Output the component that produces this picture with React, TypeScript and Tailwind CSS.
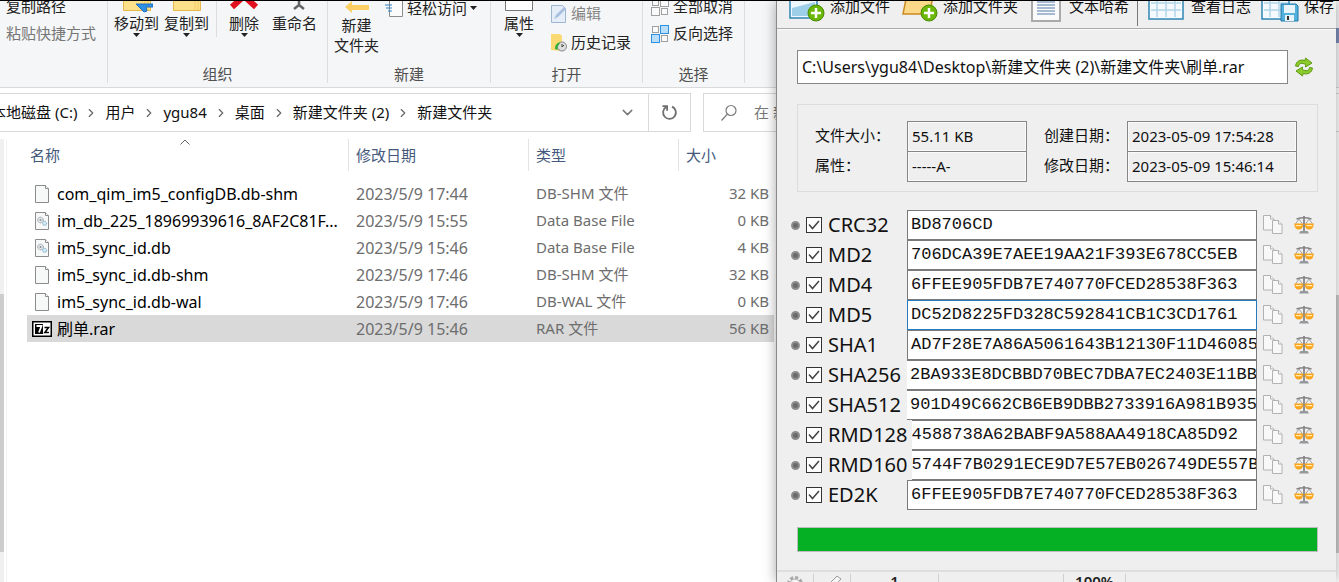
import { ChevronRight, ChevronDown } from 'lucide-react'

const ui = "font-['Noto_Sans','Noto_Sans_CJK_SC',sans-serif]"

interface FileProps {
    name: string,
    date: string,
    type: string,
    size: string,
    icon: 'blank' | 'db' | 'rar'
}

const files: FileProps[] = [
    { name: 'com_qim_im5_configDB.db-shm', date: '2023/5/9 17:44', type: 'DB-SHM 文件', size: '32 KB', icon: 'blank' },
    { name: 'im_db_225_18969939616_8AF2C81F...', date: '2023/5/9 15:55', type: 'Data Base File', size: '0 KB', icon: 'db' },
    { name: 'im5_sync_id.db', date: '2023/5/9 15:46', type: 'Data Base File', size: '4 KB', icon: 'db' },
    { name: 'im5_sync_id.db-shm', date: '2023/5/9 17:46', type: 'DB-SHM 文件', size: '32 KB', icon: 'blank' },
    { name: 'im5_sync_id.db-wal', date: '2023/5/9 17:46', type: 'DB-WAL 文件', size: '0 KB', icon: 'blank' },
    { name: '刷单.rar', date: '2023/5/9 15:46', type: 'RAR 文件', size: '56 KB', icon: 'rar' },
]

interface HashProps {
    name: string,
    value: string,
    field: string
}

const plain = 'border-[#7a7a7a] pl-[3px]'
const focused = 'border-[#2a7ab9] pl-[3px]'
const open = 'border-[#7a7a7a] border-l-0 pl-[3px]'
const tight = 'ml-1 border-[#7a7a7a] border-l-0 pl-0'

const hashes: HashProps[] = [
    { name: 'CRC32', value: 'BD8706CD', field: plain },
    { name: 'MD2', value: '706DCA39E7AEE19AA21F393E678CC5EB', field: plain },
    { name: 'MD4', value: '6FFEE905FDB7E740770FCED28538F363', field: plain },
    { name: 'MD5', value: 'DC52D8225FD328C592841CB1C3CD1761', field: focused },
    { name: 'SHA1', value: 'AD7F28E7A86A5061643B12130F11D46085', field: plain },
    { name: 'SHA256', value: '2BA933E8DCBBD70BEC7DBA7EC2403E11BB', field: open },
    { name: 'SHA512', value: '901D49C662CB6EB9DBB2733916A981B935', field: open },
    { name: 'RMD128', value: '4588738A62BABF9A588AA4918CA85D92', field: tight },
    { name: 'RMD160', value: '5744F7B0291ECE9D7E57EB026749DE557B', field: tight },
    { name: 'ED2K', value: '6FFEE905FDB7E740770FCED28538F363', field: plain },
]

function FileIcon({ icon }: { icon: FileProps['icon'] }) {
    if (icon === 'rar') {
        return (
            <svg width="20" height="16" viewBox="0 0 20 16" className="shrink-0">
                <rect x="0.75" y="0.75" width="18.5" height="14.5" fill="#fff" stroke="#000" strokeWidth="1.5" />
                <rect x="3" y="3" width="8" height="10" fill="#000" />
                <path d="M4.5 5h5L7 11.5" fill="none" stroke="#fff" strokeWidth="1.8" />
                <path d="M12.5 6.5h4l-3.6 5h4" fill="none" stroke="#000" strokeWidth="1.6" />
            </svg>
        )
    }
    return (
        <svg width="16" height="20" viewBox="0 0 16 20" className="ml-[2px] shrink-0">
            <path d="M1.5 1.5h10l3 3v14h-13z" fill="#f7f8f8" stroke="#8c8c8c" />
            <path d="M11.5 1.5v3h3" fill="#fff" stroke="#8c8c8c" />
            {icon === 'db' && (
                <>
                    <circle cx="6.5" cy="9" r="2.8" fill="#e4e9ec" stroke="#8a9298" strokeDasharray="1.2 0.6" />
                    <circle cx="6.5" cy="9" r="1" fill="#8a9298" />
                    <circle cx="10.6" cy="12.4" r="2" fill="#d6ecf8" stroke="#6fa5c4" strokeDasharray="1.2 0.6" />
                </>
            )}
        </svg>
    )
}

function Caret() {
    return <svg width="7" height="4" viewBox="0 0 7 4"><path d="M0 0h7L3.5 4z" fill="#222" /></svg>
}

function FolderIcon({ arrow }: { arrow?: boolean }) {
    return (
        <svg width="32" height="32" viewBox="0 0 32 32">
            <path d="M2.5 3.5h27v26h-27z" fill="#ffe08a" stroke="#e5b94a" />
            <path d="M24 4v25M27 4v25" stroke="#f2cc66" />
            {arrow && <path d="M15 23h17v3h-7l1 4-3 1-8-8z" fill="#2f8fe4" stroke="#1c6fc0" />}
        </svg>
    )
}

function BigButton({ icon, text, caret }: { icon: React.ReactNode, text: string[], caret?: boolean }) {
    return (
        <button className="flex flex-col items-center">
            {icon}
            {text.map((line) => <span key={line} className="h-5 leading-5">{line}</span>)}
            {caret && <Caret />}
        </button>
    )
}

function Group({ label, width, children }: { label: string, width: string, children: React.ReactNode }) {
    return (
        <section className={`flex shrink-0 flex-col justify-end border-r border-[#dcdddf] ${width}`}>
            <div className="flex h-[60px] flex-col justify-end">{children}</div>
            <div className="h-[22px] pt-[5px] text-center leading-4 text-[#505050]">{label}</div>
        </section>
    )
}

function SelectIcon({ mixed }: { mixed?: boolean }) {
    const on = { fill: '#b8defc', stroke: '#2f8fe0' }
    const off = { fill: '#fafafa', stroke: '#a0a0a0' }
    return (
        <svg width="18" height="18" viewBox="0 0 18 18">
            <rect x="1.5" y="1.5" width="6" height="6" {...off} />
            <rect x="9.5" y="0.5" width="8" height="8" {...(mixed ? on : off)} />
            <rect x="0.5" y="9.5" width="8" height="8" {...(mixed ? on : off)} />
            <rect x="10.5" y="10.5" width="6" height="6" {...off} />
        </svg>
    )
}

function Ribbon() {
    return (
        <div className="flex h-[87px] shrink-0 items-end overflow-hidden border-b border-[#d9dadb] bg-[#f5f6f7] pb-1 text-[15px] text-[#222]">
            <Group label="" width="w-[108px]">
                <div className="flex flex-col items-start pb-3.5 pl-1.5 whitespace-nowrap">
                    <button className="h-[27px]">复制路径</button>
                    <button className="h-[27px] text-[#767676]">粘贴快捷方式</button>
                </div>
            </Group>
            <Group label="组织" width="w-[220px]">
                <div className="flex items-end pb-6 pl-1.5">
                    <div className="flex gap-[5px] border-r border-[#dcdddf] pr-[7px]">
                        <BigButton icon={<FolderIcon arrow />} text={['移动到']} caret />
                        <BigButton icon={<FolderIcon />} text={['复制到']} caret />
                    </div>
                    <div className="flex gap-3 pl-[11px]">
                        <BigButton
                            icon={<svg width="32" height="32" viewBox="0 0 32 32"><path d="M4 4l24 22M28 4L4 26" stroke="#e0101e" strokeWidth="6" /></svg>}
                            text={['删除']}
                            caret
                        />
                        <BigButton
                            icon={<svg width="32" height="32" viewBox="0 0 32 32"><path d="M20 10v15M20 24l-5 4M20 24l5 4" stroke="#666" strokeWidth="2.5" fill="none" /></svg>}
                            text={['重命名']}
                        />
                    </div>
                </div>
            </Group>
            <Group label="新建" width="w-[163px]">
                <div className="flex items-end gap-[5px] pb-1.5 pl-1.5">
                    <BigButton
                        icon={<svg width="32" height="32" viewBox="0 0 32 32"><path d="M4 24l7-6v4h17v5H11v3z" fill="#fbcf63" /></svg>}
                        text={['新建', '文件夹']}
                    />
                    <button className="mb-9 flex items-center gap-[3px]">
                        <svg width="20" height="20" viewBox="0 0 20 20">
                            <path d="M5.5 1.5h13v17h-13z" fill="#fbfbfb" stroke="#8c8c8c" />
                            <path d="M1 7h7M2 10h6M4 13h4" stroke="#2f80c4" />
                        </svg>
                        轻松访问
                        <Caret />
                    </button>
                </div>
            </Group>
            <Group label="打开" width="w-[152px]">
                <div className="flex items-end gap-4 pl-3">
                    <div className="mb-6">
                        <BigButton
                            icon={<svg width="32" height="32" viewBox="0 0 32 32"><path d="M2.5 4.5h27v25h-27z" fill="#fff" stroke="#777" /></svg>}
                            text={['属性']}
                            caret
                        />
                    </div>
                    <div className="flex flex-col pb-1">
                        <button className="flex h-[29px] items-center gap-1 text-[#858585]">
                            <svg width="16" height="18" viewBox="0 0 16 18">
                                <path d="M0.5 0.5h11l3 3v14h-14z" fill="#e4edf8" stroke="#9fb6d3" />
                                <path d="M3 14l2-4 8-8 2 2-8 8z" fill="#a9c0de" />
                            </svg>
                            编辑
                        </button>
                        <button className="flex h-[29px] items-center gap-1">
                            <svg width="16" height="18" viewBox="0 0 16 18">
                                <path d="M0 0h9l2 2v15l-11-1z" fill="#fbd973" />
                                <circle cx="11" cy="12.5" r="4.5" fill="#ddd" stroke="#888" />
                                <path d="M11 10v3l2-2" stroke="#444" fill="none" />
                                <path d="M4 15c0-4 2-6 5-7l-1 3c-2 1-2 3-1 5z" fill="#2fae3c" />
                            </svg>
                            历史记录
                        </button>
                    </div>
                </div>
            </Group>
            <Group label="选择" width="w-[102px]">
                <div className="flex flex-col pb-3.5 pl-2 whitespace-nowrap">
                    <button className="flex h-[27px] items-center gap-1"><SelectIcon />全部取消</button>
                    <button className="flex h-[27px] items-center gap-1"><SelectIcon mixed />反向选择</button>
                </div>
            </Group>
        </div>
    )
}

function AddressBar() {
    const path = ['本地磁盘 (C:)', '用户', 'ygu84', '桌面', '新建文件夹 (2)', '新建文件夹']
    return (
        <div className="flex h-[50px] shrink-0 gap-3 overflow-hidden pt-[5px] pb-[6px] text-[15px]">
            <nav className="flex min-w-0 flex-1 border border-l-0 border-[#d9d9d9]">
                <div className="-ml-[9px] flex flex-1 items-center whitespace-nowrap">
                    {path.map((item, i) => (
                        <div key={item} className="flex items-center">
                            {i > 0 && <ChevronRight size={14} className="mx-[7px] text-[#666]" />}
                            <a href="#" className="text-[#111]">{item}</a>
                        </div>
                    ))}
                </div>
                <button aria-label="展开" className="px-3"><ChevronDown size={17} className="text-[#777]" /></button>
                <button aria-label="刷新" className="border-l border-[#d9d9d9] px-3">
                    <svg width="17" height="17" viewBox="0 0 17 17" fill="none" stroke="#6f6f6f" strokeWidth="1.800">
                        <path d="M11 2.600a6.400 6.400 0 1 1-5.600.3" />
                        <path d="M1.500 2.200h4.600v4.600" />
                    </svg>
                </button>
            </nav>
            <label className="flex w-[73px] shrink-0 items-center gap-4 overflow-hidden border border-r-0 border-[#d9d9d9] pl-4 text-[#777]">
                <svg width="18" height="18" viewBox="0 0 18 18" className="shrink-0" fill="none" stroke="#7c7c7c" strokeWidth="1.200">
                    <circle cx="11" cy="6.500" r="5" />
                    <path d="M7.500 10L1.500 16.500" />
                </svg>
                <input placeholder="在 新建文件夹 中搜索" className="w-44 shrink-0 placeholder:text-[#777]" />
            </label>
        </div>
    )
}

function FileTable() {
    const head = 'flex h-8 items-center border-r border-[#e3e3e3] pl-[7px] text-[#44597c]'
    return (
        <div className="flex flex-1 pt-px">
            <div className="w-1 shrink-0 bg-[#f0f0f0] pt-[155px]">
                <div className="h-[258px] bg-[#cdcdcd]" />
            </div>
            <div className="ml-0.5 flex-1 border-l border-[#f3f3f3] pr-0.5 pl-5">
                <table className="w-full table-fixed text-left text-[15px]">
                    <colgroup>
                        <col />
                        <col className="w-[180px]" />
                        <col className="w-[150px]" />
                        <col className="w-[95px]" />
                    </colgroup>
                    <thead>
                        <tr>
                            <th className="p-0 pb-[9px] font-normal">
                                <div className={`${head} relative !pl-[3px]`}>
                                    名称
                                    <svg width="10" height="6" viewBox="0 0 10 6" className="absolute top-0 left-1/2 -ml-2"><path d="M0.5 5.5L5 1l4.500 4.500" fill="none" stroke="#666" /></svg>
                                </div>
                            </th>
                            <th className="p-0 pb-[9px] font-normal"><div className={head}>修改日期</div></th>
                            <th className="p-0 pb-[9px] font-normal"><div className={head}>类型</div></th>
                            <th className="p-0 pb-[9px] font-normal"><div className={`${head} border-r-0`}>大小</div></th>
                        </tr>
                    </thead>
                    <tbody className="whitespace-nowrap text-[#6d6d6d]">
                        {files.map((file) => (
                            <tr key={file.name} className={file.icon === 'rar' ? 'h-[27px] bg-[#d9d9d9]' : 'h-[27px]'}>
                                <td className="p-0 pl-[5px] text-base">
                                    <div className="flex items-center text-black">
                                        <div className="w-[25px] shrink-0"><FileIcon icon={file.icon} /></div>
                                        {file.name}
                                    </div>
                                </td>
                                <td className="p-0 pl-[7px] text-base">{file.date}</td>
                                <td className="p-0 pl-[7px]">{file.type}</td>
                                <td className="p-0 pr-[5px] text-right">{file.size}</td>
                            </tr>
                        ))}
                    </tbody>
                </table>
            </div>
        </div>
    )
}

function Plus({ x, y }: { x: number, y: number }) {
    return (
        <g>
            <circle cx={x} cy={y} r="8" fill="#6cb80a" stroke="#4a8a06" />
            <path d={`M${x - 5} ${y}h10M${x} ${y - 5}v10`} stroke="#fff" strokeWidth="2.5" />
        </g>
    )
}

function GridIcon({ disk }: { disk?: boolean }) {
    return (
        <svg width="38" height="32" viewBox="0 0 38 32">
            <path d={disk ? 'M1 -4h27v33H1z' : 'M1 -4h34v33H1z'} fill="#f4fafe" stroke="#2f86b5" strokeWidth="1.500" />
            <path d={disk ? 'M3 13h24M3 20h24M9 0v27M18 0v27' : 'M3 13h30M3 20h30M9 0v27M18 0v27M27 0v27'} stroke="#b3d6ea" strokeWidth="1.500" />
            {disk && (
                <g>
                    <path d="M20 14h15l2 2v15H20z" fill="#54b1dd" stroke="#1f78a8" />
                    <rect x="23" y="15" width="11" height="8" fill="#e8f4fa" />
                    <rect x="24" y="25" width="9" height="6" fill="#e8f4fa" />
                    <rect x="26" y="26" width="2" height="4" fill="#333" />
                </g>
            )}
        </svg>
    )
}

function Toolbar() {
    const item = 'flex shrink-0 items-end gap-[5px]'
    return (
        <div className="flex h-7 shrink-0 items-end overflow-hidden border-b border-[#ababab] pb-1.5 pl-3 text-[15px] whitespace-nowrap text-[#111]">
            <button className={item}>
                <svg width="36" height="32" viewBox="0 0 36 32">
                    <path d="M1 -4h27v32H1z" fill="#eef7fc" stroke="#2f86b5" strokeWidth="1.500" />
                    <path d="M3 18l23-6v14H3z" fill="#9dd0e8" />
                    <Plus x={27} y={23} />
                </svg>
                <span className="mb-1.5 leading-5">添加文件</span>
            </button>
            <button className={`${item} ml-3`}>
                <svg width="36" height="32" viewBox="0 0 36 32">
                    <path d="M5 4h26l-3 20H1z" fill="#fbd989" stroke="#c98b22" strokeWidth="1.500" />
                    <Plus x={27} y={23} />
                </svg>
                <span className="mb-1.5 leading-5">添加文件夹</span>
            </button>
            <button className={`${item} ml-3`}>
                <svg width="34" height="32" viewBox="0 0 34 32">
                    <path d="M2 0h28v31h-28z" fill="#fafafa" stroke="#aaa" strokeWidth="2" />
                    <path d="M7 12h18M7 15h18M7 18h18M7 21h18M7 24h18" stroke="#8ba6c6" strokeWidth="1.500" />
                </svg>
                <span className="mb-1.5 leading-5">文本哈希</span>
            </button>
            <div className="-mb-1 ml-2 h-8 w-px shrink-0 bg-[#777]" />
            <button className={`${item} ml-2.5`}><GridIcon /><span className="mb-1.5 leading-5">查看日志</span></button>
            <button className={`${item} ml-2.5`}><GridIcon disk /><span className="mb-1.5 leading-5">保存日志</span></button>
        </div>
    )
}

function RefreshIcon() {
    return (
        <svg width="20" height="20" viewBox="0 0 20 20" fill="#8ccb2c" stroke="#5c9a12" strokeLinejoin="round">
            <path d="M1.500 9C2 4.500 6 2 11 3.500L11.500 1l6.500 5-6.500 4 .2-2.500C8 5.500 5 6 4.500 9.500z" />
            <path d="M18.500 11c-.5 4.500-4.500 7-9.500 5.500L8.500 19 2 14l6.500-4-.2 2.500c3.700 2 6.700 1.500 7.200-2z" />
        </svg>
    )
}

function CopyIcon() {
    return (
        <svg width="20" height="20" viewBox="0 0 20 20" fill="#f8f8f8" stroke="#b2b2b2">
            <path d="M0.500 0.500h7l3.500 3.500v11h-10.500z" />
            <path d="M7.500 0.500v3.500h3.500" />
            <path d="M9.500 5.500h6l3.500 3.500v9.500h-9.500z" />
            <path d="M15.500 5.500v3.500h3.500" />
        </svg>
    )
}

function ScalesIcon() {
    return (
        <svg width="20" height="20" viewBox="0 0 20 20">
            <path d="M10 1v15" stroke="#858585" strokeWidth="1.800" />
            <path d="M2.500 4q7.500-2.500 15 0" fill="none" stroke="#858585" strokeWidth="1.600" />
            <path d="M5 4L1.500 9M5 4L8.500 9M15 4L11.500 9M15 4L18.500 9" fill="none" stroke="#a5a5a5" />
            <path d="M0.300 8.500h9q0 6-4.500 6t-4.500-6zM10.700 8.500h9q0 6-4.500 6t-4.500-6z" fill="#fba51c" />
            <path d="M1.800 10.600h5.800M12.400 10.600h5.800" stroke="#ffe9ac" strokeWidth="1.400" />
            <path d="M6.500 16h7l1.500 2.500H5z" fill="#94979b" />
        </svg>
    )
}

function HashRow({ name, value, field }: HashProps) {
    return (
        <div className="flex h-[30px] items-center">
            <div className="mr-1.5 size-[9px] rounded-full border-2 border-[#8d8d8d] bg-[#6b6b6b]" />
            <label className="flex h-full min-w-[101px] shrink-0 items-center text-xl">
                <span className="relative mr-1.5 flex size-4 text-[#444]">
                    <input type="checkbox" defaultChecked className="size-4 appearance-none border border-[#333] bg-white" />
                    <svg viewBox="0 0 16 16" className="pointer-events-none absolute inset-0"><path d="M3 7.500l3.500 4L13 4" fill="none" stroke="currentColor" strokeWidth="1.500" /></svg>
                </span>
                {name}
            </label>
            <input
                readOnly
                aria-label={name}
                defaultValue={value}
                className={`h-[30px] min-w-0 flex-1 border bg-white pb-0.5 font-['Liberation_Mono',monospace] text-[17px] text-[#111] ${field}`}
            />
            <button aria-label="复制" className="ml-1.5"><CopyIcon /></button>
            <button aria-label="比较" className="ml-[11px]"><ScalesIcon /></button>
        </div>
    )
}

function Info({ label, value }: { label: string, value: string }) {
    return <input readOnly aria-label={label} defaultValue={value} className="-mt-px block h-[31px] w-full border border-[#868686] px-1 pb-0.5 outline-1 -outline-offset-2 outline-[#fafafa]" />
}

function HashWindow() {
    return (
        <main className="relative flex h-full w-[560px] shrink-0 flex-col border-l border-[#8a8a8a] bg-[#efefef] shadow-[0_0_12px_rgba(0,0,0,0.35)]">
            <Toolbar />
            <div className="shrink-0 border-t border-[#fafafa] pr-[18px] pl-5 text-[15px] text-[#111]">
                <div className="flex items-center gap-1.5 pt-5 pr-1">
                    <input readOnly aria-label="文件路径" defaultValue="C:\Users\ygu84\Desktop\新建文件夹 (2)\新建文件夹\刷单.rar" className="h-[34px] min-w-0 flex-1 border border-[#868686] bg-white px-1 pb-0.5 text-base" />
                    <button aria-label="重新计算"><RefreshIcon /></button>
                </div>
                <fieldset className="mt-5 flex h-[88px] items-start border border-[#dcdcdc] pt-[15px] pr-5 pl-[17px]">
                    <div className="w-[92px] leading-[30px]"><div>文件大小：</div><div>属性：</div></div>
                    <div className="w-[120px] pt-0.5"><Info label="文件大小" value="55.11 KB" /><Info label="属性" value="-----A-" /></div>
                    <div className="ml-[17px] w-[83px] leading-[30px]"><div>创建日期：</div><div>修改日期：</div></div>
                    <div className="flex-1 pt-0.5"><Info label="创建日期" value="2023-05-09 17:54:28" /><Info label="修改日期" value="2023-05-09 15:46:14" /></div>
                </fieldset>
                <div className="mt-[18px] -ml-1.5 pr-1">
                    {hashes.map((hash) => <HashRow key={hash.name} {...hash} />)}
                </div>
                <div role="progressbar" aria-label="进度" aria-valuenow={100} className="mt-[17px] h-[25px] border border-[#bcbcbc] bg-[#06b025]" />
            </div>
            <footer className="mt-[18px] flex h-8 shrink-0 border-t-2 border-[#dedede] pt-0.5 text-center text-[15px] leading-3.5 font-semibold text-[#222]">
                <div className="flex w-[37px] justify-center border-r border-[#d0d0d0]">
                    <svg width="18" height="20" viewBox="0 0 18 20"><circle cx="9" cy="10" r="6.500" fill="none" stroke="#aaa" strokeWidth="3" strokeDasharray="3 2" /><circle cx="9" cy="10" r="5" fill="#f5f5f5" stroke="#aaa" /></svg>
                </div>
                <div className="flex w-[37px] justify-center border-r border-[#d0d0d0]">
                    <svg width="22" height="20" viewBox="0 0 22 20"><path d="M2 16L16 2l4 3-11 12z" fill="#f5f5f5" stroke="#999" /></svg>
                </div>
                <div className="w-[88px] border-r border-[#d0d0d0]">1</div>
                <div className="w-[125px] border-r border-[#d0d0d0]" />
                <div className="w-[62px] border-r border-[#d0d0d0]">100%</div>
            </footer>
        </main>
    )
}

// sliver of the window behind, visible past the right edge
function BackEdge() {
    return (
        <div className="flex w-[3px] shrink-0 flex-col">
            <div className="h-[27px] bg-[#f5f6f7]" />
            <div className="h-[15px] bg-[#7d8fb8]" />
            <div className="h-[45px] border-b border-[#d9dadb] bg-[#f5f6f7]" />
            <div className="mt-[5px] h-[39px] border-y border-[#d9d9d9]" />
            <div className="mt-[163px] h-[258px] bg-[#cdcdcd]" />
        </div>
    )
}

export default function App() {
    return (
        <div className={`flex h-screen overflow-hidden border-t border-black bg-white ${ui}`}>
            <div className="flex min-w-0 flex-1 flex-col">
                <Ribbon />
                <AddressBar />
                <FileTable />
            </div>
            <HashWindow />
            <BackEdge />
        </div>
    )
}
